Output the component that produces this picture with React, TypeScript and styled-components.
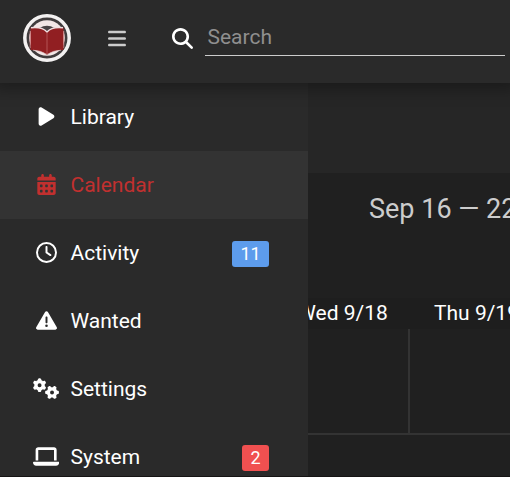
import React from 'react';
import styled, { createGlobalStyle } from 'styled-components';
import {
  FaPlay,
  FaCalendarDays,
  FaRegClock,
  FaTriangleExclamation,
  FaGears,
  FaLaptop,
  FaBars,
  FaMagnifyingGlass,
} from 'react-icons/fa6';

const GlobalStyle = createGlobalStyle`
  *, *::before, *::after { box-sizing: border-box; }
  body {
    margin: 0;
    background: #202020;
    color: #fff;
    font-family: Roboto, "Liberation Sans", sans-serif;
    font-size: 21px;
    overflow: hidden;
  }
`;

const Page = styled.div`
  display: flex;
  flex-direction: column;
  width: 100%;
  height: 477px;
  overflow: hidden;
  border-bottom: 1px solid #161414;
`;

const Header = styled.header`
  display: flex;
  flex: 0 0 83px;
  align-items: flex-start;
  padding-left: 23px;
  background: #2a2a2a;
  box-shadow: 0 0 15px 7px rgba(0, 0, 0, 0.3);
  z-index: 2;
`;

const Logo = styled.svg`
  flex: none;
  width: 48px;
  height: 48px;
  margin-top: 14px;
`;

const MenuButton = styled.button`
  display: flex;
  width: 18px;
  margin: 28px 0 0 37px;
  padding: 0;
  border: 0;
  background: none;
  color: #ccc;
  font-size: 21px;
  svg { flex: none; width: 18px; }
`;

const SearchIcon = styled(FaMagnifyingGlass)`
  flex: none;
  margin: 28px 0 0 46px;
  font-size: 21px;
`;

const SearchInput = styled.input`
  width: 300px;
  height: 37px;
  margin: 19px 0 0 12px;
  padding: 0 0 0 2.5px;
  border: 0;
  border-bottom: 1px solid #ccc;
  outline: 0;
  background: none;
  font: inherit;
  color: #fff;
  &::placeholder { color: #8f8f8f; opacity: 1; }
`;

const Body = styled.div`
  display: flex;
  flex: 1;
  min-height: 0;
`;

const Sidebar = styled.nav`
  flex: 0 0 308px;
  background: #2a2a2a;
  overflow: hidden;
  z-index: 1;
`;

const NavItem = styled.a<{ $active?: boolean }>`
  display: flex;
  align-items: center;
  height: 68px;
  padding: 0 39px 0 33px;
  background: ${({ $active }) => ($active ? '#333' : 'transparent')};
  color: ${({ $active }) => ($active ? '#c1302f' : '#fff')};
`;

const NavIcon = styled.span<{ $wide?: boolean }>`
  display: flex;
  justify-content: center;
  width: 26px;
  margin: 0 11.5px 1px 0;
  svg { flex: none; width: ${({ $wide }) => ($wide ? 26.25 : 21)}px; height: 21px; }
`;

const NavLabel = styled.span`
  flex: 1;
  line-height: 30px;
`;

const Badge = styled.span<{ $kind: 'info' | 'danger' }>`
  height: 26px;
  padding: 0 8.4px;
  margin-top: 2px;
  border-radius: 3px;
  background: ${({ $kind }) => ($kind === 'info' ? '#5d9cec' : '#f05050')};
  font-size: 18px;
  line-height: 26px;
`;

const Content = styled.main`
  flex: 1;
  min-width: 0;
  overflow: hidden;
`;

const Toolbar = styled.div`
  height: 90px;
  background: #262626;
`;

const Title = styled.h1`
  height: 125px;
  margin: 0;
  padding: 17px 0 0 61px;
  font-size: 27px;
  font-weight: 400;
  line-height: 38px;
  color: #ccc;
  white-space: nowrap;
`;

const Week = styled.div`
  display: grid;
  grid-template-columns: 135px 133px;
  width: 268px;
  margin-left: -33px;
`;

const DayHeading = styled.div`
  height: 31px;
  background: #1e1e1e;
  text-align: center;
  line-height: 31px;
  white-space: nowrap;
`;

const DayCell = styled.div`
  height: 106px;
  border-right: 2px solid #333;
  border-bottom: 2px solid #333;
`;

const navItems: {
  label: string;
  icon: React.ReactNode;
  wide?: boolean;
  active?: boolean;
  badge?: string;
  kind?: 'info' | 'danger';
}[] = [
  { label: 'Library', icon: <FaPlay /> },
  { label: 'Calendar', icon: <FaCalendarDays />, active: true },
  { label: 'Activity', icon: <FaRegClock />, badge: '11', kind: 'info' },
  { label: 'Wanted', icon: <FaTriangleExclamation /> },
  { label: 'Settings', icon: <FaGears />, wide: true },
  { label: 'System', icon: <FaLaptop />, wide: true, badge: '2', kind: 'danger' },
];

const BookLogo = () => (
  <Logo viewBox="0 0 48 48" aria-hidden="true">
    <circle cx="24" cy="24" r="22.2" fill="#403c3d" stroke="#f3f1f1" strokeWidth="3.5" />
    <circle cx="24" cy="24" r="17.8" fill="#f2e6e6" />
    <path d="M16.5 14Q24 9.5 31.5 14L27 16L24 18L21 16Z" fill="#494345" />
    <path d="M7.5 13.5Q19 12 24 18Q29 12 40.5 13.5V36Q30 36 24 41Q18 36 7.5 36Z" fill="#911f22" />
    <path d="M8 13.8Q19 12.5 24 18Q29 12.5 40 13.8" fill="none" stroke="#f0dfe0" strokeWidth="1.4" />
    <path d="M10 36.2Q18 36.5 24 40.5Q30 36.5 38 36.2" fill="none" stroke="#e5c8c9" strokeWidth=".7" />
    <path d="M7.2 17V34M40.8 17V34" stroke="#d98b8d" strokeWidth=".8" />
    <path d="M24 18V40" stroke="#bd6263" strokeWidth=".8" />
  </Logo>
);

export default function App() {
  return (
    <Page>
      <GlobalStyle />
      <Header>
        <BookLogo />
        <MenuButton aria-label="Menu">
          <FaBars />
        </MenuButton>
        <SearchIcon />
        <SearchInput placeholder="Search" />
      </Header>
      <Body>
        <Sidebar>
          {navItems.map((item) => (
            <NavItem key={item.label} $active={item.active}>
              <NavIcon $wide={item.wide}>{item.icon}</NavIcon>
              <NavLabel>{item.label}</NavLabel>
              {item.badge && <Badge $kind={item.kind ?? 'info'}>{item.badge}</Badge>}
            </NavItem>
          ))}
        </Sidebar>
        <Content>
          <Toolbar />
          <Title>Sep 16 — 22</Title>
          <Week>
            <DayHeading>Wed 9/18</DayHeading>
            <DayHeading>Thu 9/19</DayHeading>
            <DayCell />
            <DayCell />
          </Week>
        </Content>
      </Body>
    </Page>
  );
}
